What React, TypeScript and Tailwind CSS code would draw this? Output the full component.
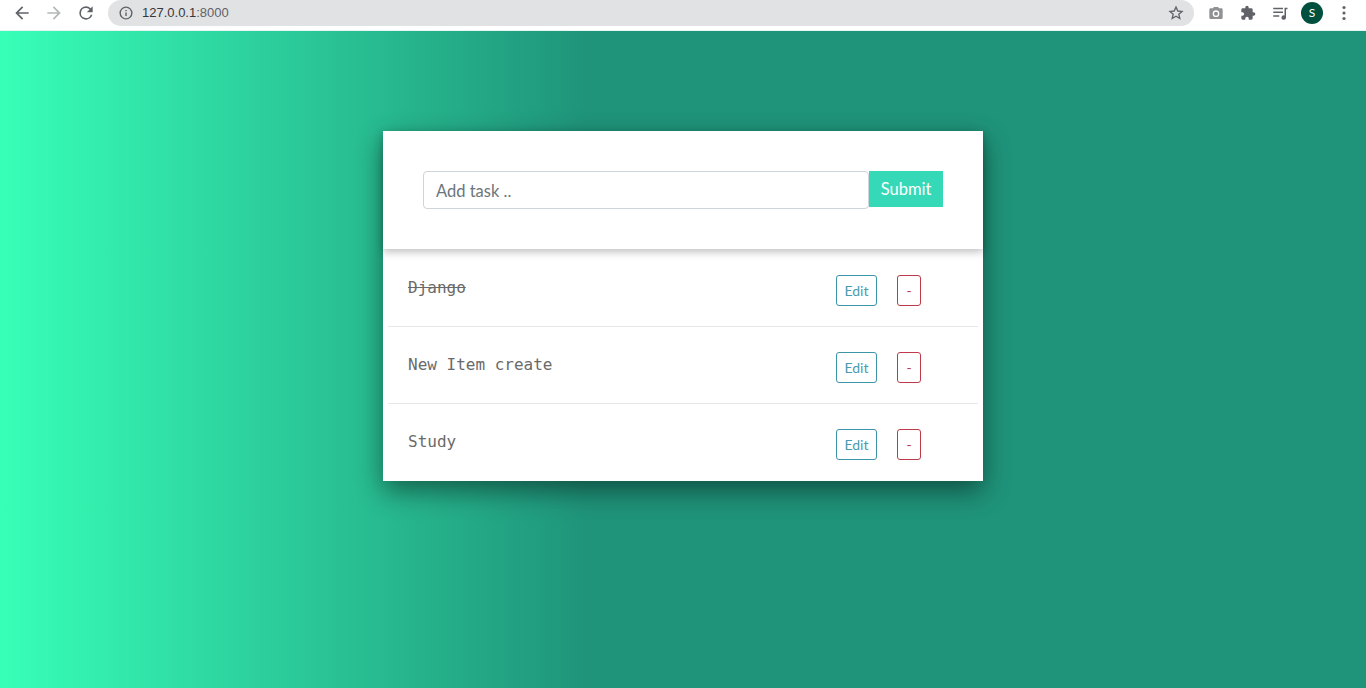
import React from "react";

const Task = ({ text, done, last }: { text: string; done?: boolean; last?: boolean }) => (
  <div className={`mx-[5px] flex h-[77px] ${last ? "" : "border-b border-[#e8e8e8]"}`}>
    <div className="flex-1 pl-5 pt-[25px]">
      <span className={`font-['DejaVu_Sans_Mono',monospace] text-base leading-6 text-[#6a6a6a] ${done ? "line-through" : ""}`}>
        {text}
      </span>
    </div>
    <div className="flex items-start gap-5 pt-[25px] pr-[57px] font-['Lato',sans-serif] text-[14px]">
      <button className="h-[31px] w-[41px] rounded-[3px] border border-[#3c95a8] text-[#4a9bb0]">Edit</button>
      <button className="h-[31px] w-6 rounded-[3px] border border-[#c0394b] text-[#c0394b]">-</button>
    </div>
  </div>
);

export default function App() {
  return (
    <div className="flex h-[688px] flex-col overflow-hidden font-['Lato',sans-serif]">
      <header className="flex h-[31px] shrink-0 items-start border-b border-[#e6f5f0] bg-white">
        <div className="flex h-[25px] items-center gap-[12px] pl-[12px] text-[#5f6368]">
          <svg width="20" height="20" viewBox="0 0 24 24" fill="#5f6368"><path d="M20 11H7.83l5.59-5.59L12 4l-8 8 8 8 1.41-1.41L7.83 13H20v-2z" /></svg>
          <svg width="20" height="20" viewBox="0 0 24 24" fill="#b4b6b8"><path d="M4 11h12.17l-5.59-5.59L12 4l8 8-8 8-1.41-1.41L16.17 13H4v-2z" /></svg>
          <svg width="20" height="20" viewBox="0 0 24 24" fill="#5f6368"><path d="M17.65 6.35A7.96 7.96 0 0 0 12 4a8 8 0 1 0 7.73 10h-2.08A6 6 0 1 1 12 6c1.66 0 3.14.69 4.22 1.78L13 11h7V4l-2.35 2.35z" /></svg>
        </div>
        <div className="ml-[12px] flex h-[26px] w-[1086px] items-center rounded-[13px] bg-[#e1e2e4] pl-[11px]">
          <svg width="14" height="14" viewBox="0 0 24 24" fill="none" stroke="#5f6368" strokeWidth="2.4"><circle cx="12" cy="12" r="10" /><path d="M12 11v6M12 7v2" /></svg>
          <span className="ml-[9px] font-['Liberation_Sans',sans-serif] text-[13px] text-[#35373a]">127.0.0.1<span className="text-[#5f6368]">:8000</span></span>
          <svg className="ml-auto mr-[10px]" width="16" height="16" viewBox="0 0 24 24" fill="none" stroke="#5f6368" strokeWidth="2"><path d="M12 3l2.7 6 6.3.6-4.8 4.2 1.5 6.4L12 16.8l-5.7 3.4 1.5-6.4L3 9.6 9.3 9z" /></svg>
        </div>
        <div className="flex h-[25px] flex-1 items-center pl-[14px]">
          <svg width="16" height="16" viewBox="0 0 24 24" fill="#8f9194"><path d="M9 3L7.2 5H4a2 2 0 0 0-2 2v12a2 2 0 0 0 2 2h16a2 2 0 0 0 2-2V7a2 2 0 0 0-2-2h-3.2L15 3H9zm3 15a5 5 0 1 1 0-10 5 5 0 0 1 0 10zm0-2a3 3 0 1 0 0-6 3 3 0 0 0 0 6z" /></svg>
          <svg className="ml-[16px]" width="16" height="16" viewBox="0 0 24 24" fill="#5f6368"><path d="M20.5 11H19V7a2 2 0 0 0-2-2h-4V3.5a2.5 2.5 0 0 0-5 0V5H4a2 2 0 0 0-2 2v3.8h1.5a2.7 2.7 0 0 1 0 5.4H2V20a2 2 0 0 0 2 2h3.8v-1.5a2.7 2.7 0 0 1 5.4 0V22H17a2 2 0 0 0 2-2v-4h1.5a2.5 2.5 0 0 0 0-5z" /></svg>
          <svg className="ml-[15px]" width="18" height="18" viewBox="0 0 24 24" fill="#5f6368"><path d="M3 5h13v2H3zM3 10h13v2H3zM3 15h8v2H3zM18 5h4v2h-2v11a3 3 0 1 1-2-2.8V5z" /></svg>
          <div className="ml-[12px] flex h-[22px] w-[22px] items-center justify-center rounded-full bg-[#00503f] text-[12px] text-white">S</div>
          <svg className="ml-[19px]" width="4" height="16" viewBox="0 0 4 16" fill="#5f6368"><circle cx="2" cy="2.5" r="1.6" /><circle cx="2" cy="8" r="1.6" /><circle cx="2" cy="13.5" r="1.6" /></svg>
        </div>
      </header>
      <main className="flex flex-1 justify-center bg-[linear-gradient(90deg,#37ffb8_0%,#1f947a_43%)] pt-[100px]">
        <div className="h-[350px] w-[600px] bg-white shadow-[0_10px_25px_rgba(0,0,0,0.45)]">
          <div className="mb-px flex h-[118px] items-start px-10 pt-10 shadow-[0_3px_8px_rgba(0,0,0,0.25)]">
            <input
              readOnly
              placeholder="Add task .."
              className="h-[38px] flex-1 rounded-[4px] border border-[#ced4da] px-3 pt-[2px] text-[16.5px] text-[#495057] placeholder:text-[#6c757d]"
            />
            <button className="h-[36px] w-[74px] bg-[#36d9b7] text-[16.5px] text-white">Submit</button>
          </div>
          <Task text="Django" done />
          <Task text="New Item create" />
          <Task text="Study" last />
        </div>
      </main>
    </div>
  );
}
